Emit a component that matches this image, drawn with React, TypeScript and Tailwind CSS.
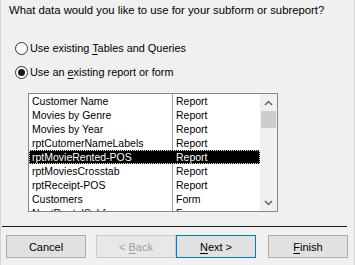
import React from "react";

const rows: [string, string][] = [
  ["Customer Name", "Report"],
  ["Movies by Genre", "Report"],
  ["Movies by Year", "Report"],
  ["rptCutomerNameLabels", "Report"],
  ["rptMovieRented-POS", "Report"],
  ["rptMoviesCrosstab", "Report"],
  ["rptReceipt-POS", "Report"],
  ["Customers", "Form"],
  ["NextRentalSubform", "Form"],
];

function Radio({ checked }: { checked?: boolean }) {
  return (
    <svg width="13" height="13" viewBox="0 0 13 13" className="shrink-0">
      <circle cx="6.5" cy="6.5" r="6" fill="#ffffff" stroke="#333333" strokeWidth="1" />
      {checked && <circle cx="6.5" cy="6.5" r="3.5" fill="#1a1a1a" />}
    </svg>
  );
}

function Chevron({ up }: { up?: boolean }) {
  return (
    <svg width="9" height="6" viewBox="0 0 9 6">
      <path
        d={up ? "M1 5 L4.5 1.5 L8 5" : "M1 1 L4.5 4.5 L8 1"}
        fill="none"
        stroke="#606060"
        strokeWidth="1.5"
      />
    </svg>
  );
}

export default function App() {
  return (
    <div
      className="w-[355px] h-[265px] bg-[#f0f0f0] border-l border-r border-[#d4d4d4] flex flex-col text-black"
      style={{ fontFamily: '"Liberation Sans", Arial, sans-serif' }}
    >
      <div className="pt-[2px] pl-[8px] h-[18px] text-[11.3px] leading-[16px]">
        What data would you like to use for your subform or subreport?
      </div>

      <div className="mt-[22px] pl-[14px] h-[16px] flex items-center gap-[2px] text-[10.9px] leading-[16px]">
        <Radio />
        <span>
          Use existing <u className="underline-offset-2">T</u>ables and Queries
        </span>
      </div>
      <div className="mt-[8px] pl-[14px] h-[16px] flex items-center gap-[2px] text-[10.9px] leading-[16px]">
        <Radio checked />
        <span>
          Use an <u className="underline-offset-2">e</u>xisting report or form
        </span>
      </div>

      <div className="mt-[13px] ml-[27px] w-[250px] h-[119px] border border-[#828790] bg-white flex overflow-hidden">
        <div className="w-[231px] flex flex-col text-[10.5px] leading-[14px]">
          {rows.map(([name, kind], i) => {
            const sel = i === 4;
            return (
              <div
                key={name}
                className={
                  "flex h-[14px] shrink-0 " +
                  (sel ? "bg-black text-white outline outline-1 outline-dotted outline-[#e8e8a0] -outline-offset-1" : "")
                }
              >
                <div
                  className={
                    "w-[144px] pl-[3px] whitespace-nowrap overflow-hidden " +
                    (sel ? "" : "border-r border-[#a0a0a0]")
                  }
                >
                  {name}
                </div>
                <div className="pl-[3px] whitespace-nowrap">{kind}</div>
              </div>
            );
          })}
        </div>
        <div className="w-[17px] bg-[#f0f0f0] flex flex-col items-center">
          <div className="h-[17px] flex items-center justify-center">
            <Chevron up />
          </div>
          <div className="w-[15px] h-[17px] bg-[#cdcdcd]" />
          <div className="flex-1" />
          <div className="h-[17px] flex items-center justify-center">
            <Chevron />
          </div>
        </div>
      </div>

      <div className="mt-[14px] ml-[1px] w-[345px] h-px bg-[#1a1a1a]" />

      <div className="mt-[8px] pl-[5px] flex text-[11px] leading-[16px]">
        <button className="w-[80px] h-[23px] bg-[#e1e1e1] border border-[#adadad]">
          Cancel
        </button>
        <button className="ml-[10px] w-[80px] h-[23px] bg-[#e8e8e8] border border-[#c8c8c8] text-[#a0a0a0]">
          &lt; <u className="underline-offset-2">B</u>ack
        </button>
        <button className="w-[80px] h-[23px] bg-[#e1e1e1] border border-[#0078d7]">
          <u className="underline-offset-2">N</u>ext &gt;
        </button>
        <button className="ml-[12px] w-[80px] h-[23px] bg-[#e1e1e1] border border-[#adadad]">
          <u className="underline-offset-2">F</u>inish
        </button>
      </div>
    </div>
  );
}
